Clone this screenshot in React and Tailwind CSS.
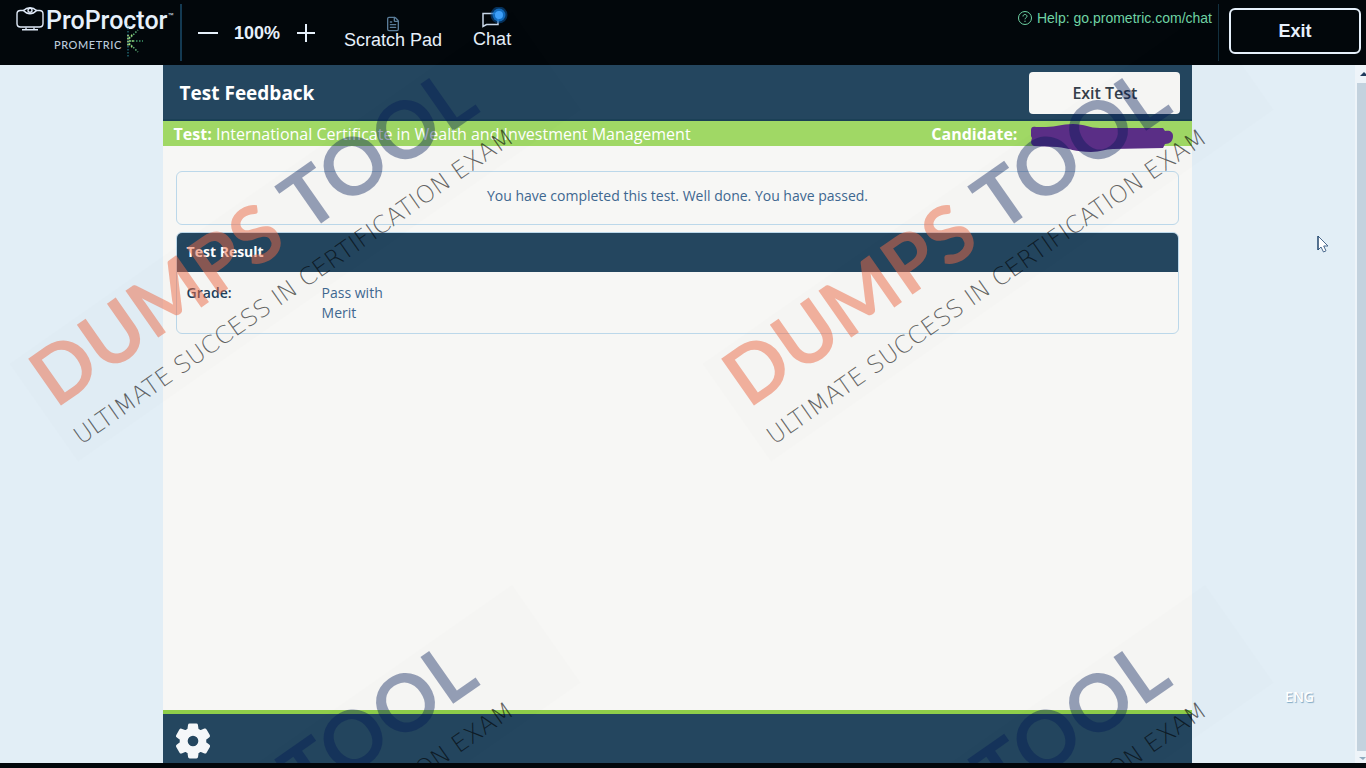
import React from 'react';
import { FileText } from 'lucide-react';

// Top left corner of every stamp in the watermark layer
const STAMPS = [
  { id: 'a', left: 78, top: 342 },
  { id: 'b', left: 771, top: 342 },
  { id: 'c', left: 78, top: 915 },
  { id: 'd', left: 771, top: 915 },
];

function MonitorLogo() {
  return (
    <svg className="h-6 w-7" viewBox="0 0 28 24" fill="none" stroke="#dfe9f8" strokeWidth="1.4">
      <path d="M8 3.5H4.5C2 3.5 1 4.5 1 7v9.500c0 2.500 1 3.500 3.500 3.500h19c2.500 0 3.500-1 3.500-3.500V7c0-2.500-1-3.500-3.500-3.500H20" />
      <path d="M7.500 3.500C9.500 1.500 11.500.7 14 .7s4.500.8 6.500 2.800C18.500 5.700 16.500 6.800 14 6.800S9.500 5.700 7.500 3.500z" />
      <circle cx="14" cy="3.300" r="2" />
      <path d="M6 22.800h16M10 20.500v2M18 20.500v2" />
    </svg>
  );
}

function Burst() {
  return (
    <svg className="absolute left-[71px] -top-3 h-8 w-5" viewBox="0 0 20 32" fill="none" strokeWidth="1.500" strokeDasharray="1.500 1.500">
      <path d="M3 0v32" stroke="#1f6470" />
      <path d="M3 10v12" stroke="#b5e08a" />
      <path d="M4 14l9-9M4 18l9 9" stroke="#5fb37a" />
      <path d="M5 16h13" stroke="#3f9a6c" />
      <path d="M4 13l4-4M4 19l4 4M4 16h5" stroke="#a5df7c" />
    </svg>
  );
}

function Toolbar() {
  return (
    <header className="flex h-[65px] shrink-0 bg-[#02070b] font-['Liberation_Sans',sans-serif] text-[#e6f0fb]">
      <div className="my-1 flex w-[182px] shrink-0 flex-col border-r-2 border-[#143a52] pl-4 pt-[3px]">
        <div className="flex items-start">
          <MonitorLogo />
          <span className="ml-0.5 whitespace-nowrap font-[Roboto,sans-serif] text-[25px] font-medium leading-7">ProProctor</span>
          <span className="text-[6px] leading-4">™</span>
        </div>
        <div className="relative ml-[38px] mt-0.5 font-[Lato,sans-serif] text-[11px] font-medium leading-4 tracking-wider text-[#bccbdb]">
          PROMETRIC
          <Burst />
        </div>
      </div>

      <div className="flex items-center gap-4 pl-4">
        <button type="button" aria-label="Zoom out" className="flex h-5 w-5 items-center justify-center">
          <svg className="h-5 w-5" viewBox="0 0 20 20" stroke="currentColor" strokeWidth="2"><path d="M0 10h20" /></svg>
        </button>
        <span className="text-lg font-bold leading-5">100%</span>
        <button type="button" aria-label="Zoom in" className="flex h-5 w-5 items-center justify-center">
          <svg className="h-5 w-5" viewBox="0 0 20 20" stroke="currentColor" strokeWidth="2"><path d="M1 10h18M10 1v18" /></svg>
        </button>
      </div>

      <button type="button" className="ml-7 flex flex-col items-center pt-4 text-lg leading-4">
        <FileText className="h-4 w-4 text-[#5a7c99]" strokeWidth={2} />
        <span>Scratch Pad</span>
      </button>
      <button type="button" className="ml-[31px] flex flex-col items-center pt-[7px] text-lg leading-5">
        <svg className="h-[22px] w-8" viewBox="0 0 32 22" fill="none">
          <path d="M7 19.500V6.500h15v11H10.500z" stroke="#c9d8ea" strokeWidth="1.500" />
          <circle cx="23" cy="8" r="8.500" fill="#0c5aa6" opacity=".5" />
          <circle cx="23" cy="8" r="6.500" fill="#1479d6" opacity=".8" />
          <circle cx="23" cy="8" r="4" fill="#3ea0fa" />
        </svg>
        <span>Chat</span>
      </button>

      <a href="#help" className="ml-auto flex items-center gap-1 self-start pt-2.5 text-sm leading-4 text-[#6fd3a4]">
        <svg className="h-4 w-4" viewBox="0 0 16 16" fill="none" stroke="currentColor">
          <circle cx="8" cy="8" r="6.500" />
          <path d="M6 6.500C6 5.200 6.800 4.500 8 4.500s2 .8 2 1.800c0 1.400-2 1.500-2 3M8 10.700v1.300" />
        </svg>
        Help: go.prometric.com/chat
      </a>
      <div className="my-1 ml-1.5 w-px bg-[#12303f]" />
      <button
        type="button"
        className="ml-2.5 mr-[5px] mt-2 h-[46px] w-[132px] rounded-md border-2 border-[#e6f0fb] text-lg font-bold leading-5"
      >
        Exit
      </button>
    </header>
  );
}

function Redaction() {
  return (
    <svg className="absolute left-0 top-0.5 h-[30px] w-[143px]" viewBox="0 0 143 30" fill="#5b2f88">
      <path d="M0 7c0-3 2-4 5-3l10 0C26 4 30 1 42 1c12 0 16 4 27 4l63 0 2 3c5-1 8 1 8 5 0 5-3 8-8 8l-2 4-50 1c-8 0-12 3-22 3-16 0-22-4-34-5L3 23c-4-2-3-5-2-8-2-3-1-5-1-8z" />
    </svg>
  );
}

function Watermark() {
  return (
    <div aria-hidden="true" className="pointer-events-none absolute inset-0 overflow-hidden">
      {STAMPS.map((s) => (
        <div
          key={s.id}
          className="absolute flex h-[120px] w-[614px] origin-bottom-left -rotate-35 flex-col justify-end bg-black/[0.008] pb-2"
          style={{ left: s.left, top: s.top }}
        >
          <div className="flex gap-5 whitespace-nowrap pl-3 font-[Lato,sans-serif] text-[79px] font-bold leading-[80px]">
            <span className="text-[#ec6a46]/50">DUMPS</span>
            <span className="text-[#001a54]/40">TOOL</span>
          </div>
          <div className="mt-3.5 whitespace-nowrap pl-3 font-['DejaVu_Sans',sans-serif] text-[24px] font-extralight leading-6 text-black/60">
            ULTIMATE SUCCESS IN CERTIFICATION EXAM
          </div>
        </div>
      ))}
    </div>
  );
}

export default function App() {
  return (
    <div className="relative flex min-h-screen flex-col overflow-hidden border-b-[5px] border-[#02070b] bg-[#e2eef6] font-['Open_Sans',sans-serif]">
      <Toolbar />

      <div className="flex flex-1">
        <div className="relative flex flex-1">
          <main className="mx-[12%] flex flex-1 flex-col bg-[#f7f7f5]">
            <div className="flex h-14 items-center justify-between border-b-2 border-[#1b4056] bg-[#24465f] pl-[17px] pr-3 pt-0.5">
              <h1 className="text-[19px] font-bold leading-6 text-white">Test Feedback</h1>
              <button type="button" className="h-[42px] w-[151px] rounded-sm bg-[#f7f7f5] text-base font-semibold text-[#35404a]">
                Exit Test
              </button>
            </div>
            <div className="flex h-[25px] items-center bg-[#a0d865] pl-[11px] text-base leading-6 text-white">
              <p><b>Test:</b> International Certificate in Wealth and Investment Management</p>
              <b className="ml-auto">Candidate:</b>
              <span className="relative ml-3.5 h-full w-[161px]"><Redaction /></span>
            </div>

            <div className="flex flex-1 flex-col gap-[7px] px-[13px] pt-[25px]">
              <p className="flex h-[54px] items-center justify-center rounded-md border border-[#bcd8ea] pb-1 text-sm text-[#3e6790]">
                You have completed this test. Well done. You have passed.
              </p>
              <section className="overflow-hidden rounded-md border border-[#bcd8ea]">
                <h2 className="bg-[#24465f] px-2.5 pb-2.5 pt-[9px] text-sm font-bold leading-5 text-white">Test Result</h2>
                <dl className="flex px-2.5 pb-2.5 pt-[11px] text-sm leading-5">
                  <dt className="w-[135px] font-semibold text-[#1d405c]">Grade:</dt>
                  <dd className="w-20 text-[#3e6790]">Pass with Merit</dd>
                </dl>
              </section>
            </div>

            <footer className="flex h-[53px] items-center border-t-4 border-[#8fce4a] bg-[#24465f] pl-2.5 pt-1">
              <button type="button" aria-label="Settings">
                <svg className="h-10 w-10" viewBox="0 0 24 24" fill="#f5f7f9">
                  <path
                    stroke="#f5f7f9"
                    strokeLinejoin="round"
                    d="M19.400 13c.04-.32.07-.65.07-1s-.03-.68-.07-1l2.110-1.650c.19-.15.24-.42.12-.64l-2-3.460c-.12-.22-.39-.3-.61-.22l-2.490 1c-.52-.4-1.080-.73-1.690-.98l-.38-2.650A.49.49 0 0 0 14 2h-4c-.25 0-.46.18-.49.42l-.38 2.650c-.61.25-1.170.59-1.690.98l-2.490-1c-.23-.09-.49 0-.61.22l-2 3.460c-.13.22-.07.49.12.64L4.600 11c-.04.32-.07.65-.07 1s.03.680.07 1l-2.110 1.650c-.19.15-.24.42-.12.64l2 3.460c.12.22.39.3.61.22l2.490-1c.52.4 1.080.73 1.690.98l.38 2.650c.03.24.24.42.49.42h4c.25 0 .46-.18.49-.42l.38-2.650c.61-.25 1.170-.59 1.690-.98l2.490 1c.23.09.49 0 .61-.22l2-3.460c.12-.22.07-.49-.12-.64zM12 15.700a3.700 3.700 0 1 1 0-7.400 3.700 3.700 0 0 1 0 7.400z"
                  />
                </svg>
              </button>
            </footer>
          </main>

          <span className="absolute bottom-[58px] right-[41px] text-sm font-semibold leading-4 text-white [text-shadow:1px_1px_1px_#7fa8c4]">ENG</span>
          {/* mouse pointer */}
          <svg className="absolute right-[26px] top-[170px] h-[18px] w-3" viewBox="0 0 12 18" fill="#fff" stroke="#4a688c">
            <path d="M1 1v14l3-3 2.500 5 2.500-1.200L6.700 11H11z" />
            <path d="M1 1v14" stroke="#0d355c" />
          </svg>
        </div>

        {/* scroll track */}
        <div className="flex w-[11px] flex-col items-end bg-[#eef4f9]">
          <svg className="h-[18px] w-2" viewBox="0 0 8 18" fill="#1f3b5c"><path d="M2 11l4-4 2 2v2z" /></svg>
          <div className="w-[9px] flex-1 bg-[#c3d2de]" />
          <svg className="h-3 w-2" viewBox="0 0 8 12" fill="#8fa9be"><path d="M1 6h7l-3 3z" /></svg>
        </div>
      </div>

      <Watermark />
    </div>
  );
}
